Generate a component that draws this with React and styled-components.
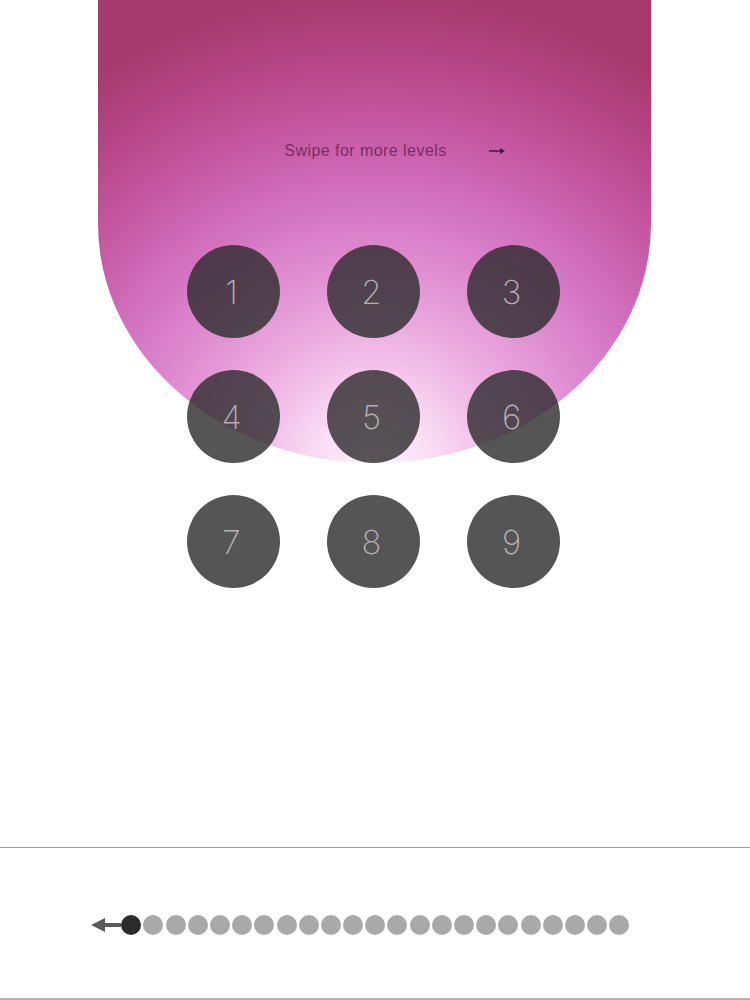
import styled, { createGlobalStyle } from "styled-components";

const GlobalStyle = createGlobalStyle`
  html, body {
    margin: 0;
    padding: 0;
    background: #fff;
  }
  body {
    font-family: "Liberation Sans", Arial, sans-serif;
  }
`;

const Page = styled.div`
  width: 750px;
  height: 1000px;
  display: flex;
  flex-direction: column;
  overflow: hidden;
  border-bottom: 2px solid #b0b0b0;
  box-sizing: border-box;
`;

const Stage = styled.div`
  height: 847px;
  display: grid;
  grid-template: 1fr / 1fr;
`;

const Blob = styled.div`
  grid-area: 1 / 1;
  align-self: start;
  margin-left: 98px;
  width: 553px;
  height: 463px;
  border-radius: 0 0 277px 277px / 0 0 240px 240px;
  background: radial-gradient(
    ellipse 500px 470px at 50% 100%,
    #fef4fc 0%,
    #f9dcf3 12%,
    #f0b6e5 25%,
    #e293d4 40%,
    #d475c2 55%,
    #c75ba6 70%,
    #b8488a 84%,
    #a6396d 100%
  );
  display: flex;
  justify-content: center;
  padding-top: 141px;
  box-sizing: border-box;
`;

const Hint = styled.div`
  display: flex;
  align-items: center;
  gap: 42px;
  height: 20px;
  margin-left: 40px;
  font-size: 16px;
  letter-spacing: 0.45px;
  color: #7a2c66;
`;

const HintArrow = () => (
  <svg width="16" height="8" viewBox="0 0 16 8">
    <path d="M0 3.3 H11 V1 L16 4 L11 7 V4.7 H0 Z" fill="#4a1c3c" />
  </svg>
);

const Keypad = styled.div`
  grid-area: 1 / 1;
  align-self: start;
  margin: 245px 0 0 187px;
  display: grid;
  grid-template-columns: repeat(3, 93px);
  grid-auto-rows: 93px;
  column-gap: 47px;
  row-gap: 32px;
`;

const Key = styled.button`
  border: none;
  padding: 0 4px 0 0;
  border-radius: 50%;
  background: rgba(44, 42, 44, 0.8);
  color: #b2b0b2;
  font-family: Inter, "Open Sans", sans-serif;
  font-weight: 200;
  font-size: 33px;
  display: flex;
  align-items: center;
  justify-content: center;
  cursor: pointer;
`;

const Footer = styled.div`
  flex: 1;
  border-top: 1px solid #9a9a9a;
  display: flex;
  align-items: center;
  padding-left: 91px;
  padding-top: 4px;
`;

const Progress = styled.div`
  display: flex;
  align-items: center;
  gap: 2.2px;
`;

const Dot = styled.span`
  width: 20px;
  height: 20px;
  border-radius: 50%;
  background: ${({ $active }) => ($active ? "#2b2b2b" : "#a9a9a9")};
  flex-shrink: 0;
`;

const BackArrow = () => (
  <svg width="30" height="18" viewBox="0 0 30 18" style={{ marginRight: "-2px" }}>
    <path d="M0 9 L14 2 L14 7 L30 7 L30 11 L14 11 L14 16 Z" fill="#5a5a5a" />
  </svg>
);

export default function App() {
  const keys = [1, 2, 3, 4, 5, 6, 7, 8, 9];
  const dots = Array.from({ length: 23 }, (_, i) => i);
  return (
    <>
      <GlobalStyle />
      <Page>
        <Stage>
          <Blob>
            <Hint>
              <span>Swipe for more levels</span>
              <HintArrow />
            </Hint>
          </Blob>
          <Keypad>
            {keys.map((k) => (
              <Key key={k}>{k}</Key>
            ))}
          </Keypad>
        </Stage>
        <Footer>
          <Progress>
            <BackArrow />
            {dots.map((i) => (
              <Dot key={i} $active={i === 0} />
            ))}
          </Progress>
        </Footer>
      </Page>
    </>
  );
}
